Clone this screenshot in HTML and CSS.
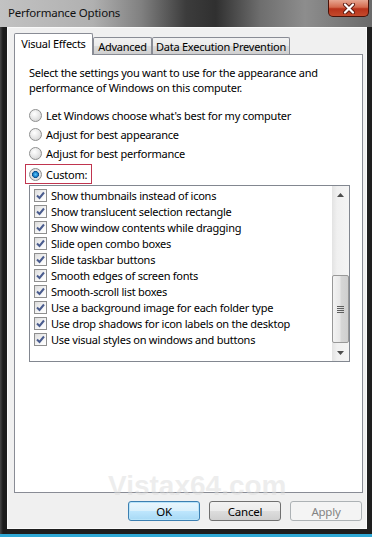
FILE: index.html
```html
<!DOCTYPE html>
<html lang="en">
<head>
    <meta charset="UTF-8">
    <meta name="viewport" content="width=device-width, initial-scale=1.0">
    <title>Performance Options</title>
    <link rel="stylesheet" href="styles.css">
</head>
<body>
    <div class="window">
        <div class="titlebar">
            <span class="title">Performance Options</span>
            <div class="close">
                <svg width="16" height="11" viewBox="0 0 16 11">
                    <path d="M4 1.5 L12 9.5 M12 1.5 L4 9.5" stroke="#5b1a10" stroke-width="4" stroke-linecap="round"/>
                    <path d="M4 1.5 L12 9.5 M12 1.5 L4 9.5" stroke="#ffffff" stroke-width="2.2" stroke-linecap="round"/>
                </svg>
            </div>
        </div>

        <div class="frame">
            <div class="client">
                <!-- Pestañas -->
                <div class="tabs">
                    <div class="tab active">Visual Effects</div>
                    <div class="tab">Advanced</div>
                    <div class="tab">Data Execution Prevention</div>
                </div>

                <div class="panel">
                    <p class="intro">
                        Select the settings you want to use for the appearance and<br>
                        performance of Windows on this computer.
                    </p>

                    <div class="radios">
                        <div class="radio"><span class="dot"></span>Let Windows choose what's best for my computer</div>
                        <div class="radio"><span class="dot"></span>Adjust for best appearance</div>
                        <div class="radio"><span class="dot"></span>Adjust for best performance</div>
                        <div class="radio custom"><span class="dot checked"></span>Custom:</div>
                    </div>

                    <div class="listbox">
                        <ul class="items">
                            <li><span class="check"></span>Show thumbnails instead of icons</li>
                            <li><span class="check"></span>Show translucent selection rectangle</li>
                            <li><span class="check"></span>Show window contents while dragging</li>
                            <li><span class="check"></span>Slide open combo boxes</li>
                            <li><span class="check"></span>Slide taskbar buttons</li>
                            <li><span class="check"></span>Smooth edges of screen fonts</li>
                            <li><span class="check"></span>Smooth-scroll list boxes</li>
                            <li><span class="check"></span>Use a background image for each folder type</li>
                            <li><span class="check"></span>Use drop shadows for icon labels on the desktop</li>
                            <li><span class="check"></span>Use visual styles on windows and buttons</li>
                        </ul>
                        <div class="scrollbar">
                            <div class="arrow">
                                <svg width="7" height="4" viewBox="0 0 7 4"><path d="M0 4 L3.5 0 L7 4 Z" fill="#4d4d4d"/></svg>
                            </div>
                            <div class="track">
                                <div class="thumb"><span class="grip"></span></div>
                            </div>
                            <div class="arrow">
                                <svg width="7" height="4" viewBox="0 0 7 4"><path d="M0 0 L7 0 L3.5 4 Z" fill="#4d4d4d"/></svg>
                            </div>
                        </div>
                    </div>
                </div>

                <!-- Botones -->
                <div class="buttons">
                    <div class="btn default">OK</div>
                    <div class="btn">Cancel</div>
                    <div class="btn disabled">Apply</div>
                </div>
            </div>
        </div>

        <div class="watermark">Vistax64.com</div>
    </div>
</body>
</html>
```

FILE: styles.css
```css
/* Base */
body {
    margin: 0;
    width: 372px;
    height: 537px;
    overflow: hidden;
    background-color: #2fa9d6; /* escritorio detrás */
    font-family: "Noto Sans", "Open Sans", sans-serif;
    font-size: 11px;
    letter-spacing: -0.25px;
    color: #000;
}

.window {
    position: relative;
    height: 534px;
    display: flex;
    flex-direction: column;
    background-color: #2a2a2a;
}

/* Barra de título (vidrio Aero) */
.titlebar {
    height: 27px;
    display: flex;
    justify-content: space-between;
    align-items: flex-start;
    padding-left: 8px;
    background: linear-gradient(90deg, #c2c2c2 0%, #b0b0b0 25%, #808080 38%, #3c3c3c 50%, #303030 58%, #6e6e6e 70%, #8d8d8d 82%, #6a6a6a 100%);
}

.title {
    margin-top: 5px;
    line-height: 16px;
    font-size: 11.5px;
    letter-spacing: -0.2px;
    color: #111;
}

.close {
    width: 41px;
    height: 17px;
    margin-right: 3px;
    box-sizing: border-box;
    display: flex;
    justify-content: center;
    align-items: center;
    border: 1px solid #4a1208;
    border-top: none;
    border-radius: 0 0 5px 5px;
    background: linear-gradient(180deg, #e7a691 0%, #d46a4e 45%, #b8321a 55%, #c44a2c 100%);
}

/* Marco */
.frame {
    flex: 1;
    display: flex;
    padding: 0 6px 5px 7px;
    background: linear-gradient(90deg, #474747 0px, #1c1c1c 3px, #1c1c1c 7px, transparent 7px),
                #1e1e1e;
}

.client {
    flex: 1;
    display: flex;
    flex-direction: column;
    padding: 5px 3px 7px 6px;
    background-color: #f0f0f0;
    border: 1px solid #fafafa;
}

/* Pestañas */
.tabs {
    height: 21px;
    display: flex;
    align-items: flex-end;
}

.tab {
    box-sizing: border-box;
    height: 17px;
    display: flex;
    justify-content: center;
    align-items: center;
    padding-top: 1px;
    border: 1px solid #898c95;
    border-bottom: none;
    border-radius: 2px 2px 0 0;
    background: linear-gradient(180deg, #f2f2f2 0%, #ebebeb 50%, #dddddd 51%, #cfcfcf 100%);
    white-space: nowrap;
}

.tab:nth-child(2) {
    width: 59px;
}

.tab:nth-child(3) {
    width: 138px;
}

.tab.active {
    position: relative;
    z-index: 1;
    width: 79px;
    height: 22px;
    margin-bottom: -1px;
    padding: 0 0 2px 0;
    background: #ffffff;
}

/* Panel */
.panel {
    flex: 1;
    padding: 10px 12px 0 14px;
    background-color: #ffffff;
    border: 1px solid #898c95;
}

.intro {
    margin: 0;
    line-height: 15px;
}

.radios {
    margin-top: 11px;
}

.radio {
    height: 19px;
    display: flex;
    align-items: center;
}

.radio.custom {
    box-sizing: border-box;
    width: 67px;
    height: 20px;
    margin: 1px 0 0 -4px;
    padding-left: 3px;
    border: 1px solid #c0354f;
}

.dot {
    box-sizing: border-box;
    width: 13px;
    height: 13px;
    margin-right: 4px;
    border: 1px solid #8e8f8f;
    border-radius: 50%;
    background: radial-gradient(circle at 40% 35%, #ffffff 0%, #e9e9e9 45%, #c9c9c9 100%);
}

.dot.checked {
    background: radial-gradient(circle, #58c8ff 0%, #1b7dc4 30%, #0b4a86 42%, #e6e6e6 48%, #d2d2d2 100%);
}

/* Lista con casillas */
.listbox {
    box-sizing: border-box;
    width: 321px;
    height: 177px;
    margin-top: 1px;
    display: flex;
    border: 1px solid #828790;
}

.items {
    flex: 1;
    margin: 0;
    padding: 1px 0 0 4px;
    list-style: none;
}

.items li {
    height: 16px;
    display: flex;
    align-items: center;
    white-space: nowrap;
}

.check {
    box-sizing: border-box;
    width: 13px;
    height: 13px;
    margin-right: 4px;
    border: 1px solid #8f8f8f;
    background:
        url("data:image/svg+xml,%3Csvg xmlns='http://www.w3.org/2000/svg' width='11' height='11' viewBox='0 0 11 11'%3E%3Cpath d='M2 5.5 L4.5 8 L9 2.5' fill='none' stroke='%234a5c8e' stroke-width='2'/%3E%3C/svg%3E") center / 11px 11px no-repeat,
        linear-gradient(135deg, #dcdcdc 0%, #f6f6f6 60%, #ffffff 100%);
}

/* Barra de desplazamiento */
.scrollbar {
    width: 17px;
    display: flex;
    flex-direction: column;
    background: linear-gradient(90deg, #e3e3e3 0%, #f0f0f0 30%, #f4f4f4 100%);
}

.arrow {
    height: 17px;
    display: flex;
    justify-content: center;
    align-items: center;
}

.track {
    flex: 1;
    display: flex;
    flex-direction: column;
    justify-content: flex-end;
}

.thumb {
    box-sizing: border-box;
    height: 68px;
    margin: 0 0 1px 0;
    display: flex;
    justify-content: center;
    align-items: center;
    border: 1px solid #989898;
    border-radius: 2px;
    background: linear-gradient(90deg, #f3f3f3 0%, #e8e8e8 45%, #d6d6d6 55%, #cfcfcf 100%);
}

.grip {
    width: 7px;
    height: 7px;
    background: repeating-linear-gradient(180deg, #5e5e5e 0px, #5e5e5e 1px, transparent 1px, transparent 2px);
}

/* Botones */
.buttons {
    display: flex;
    justify-content: flex-end;
    gap: 9px;
    margin: 8px 1px 0 0;
    font-size: 11.5px;
}

.btn {
    box-sizing: border-box;
    width: 72px;
    height: 20px;
    display: flex;
    justify-content: center;
    align-items: center;
    border: 1px solid #707070;
    border-radius: 3px;
    background: linear-gradient(180deg, #f2f2f2 0%, #ebebeb 50%, #dddddd 51%, #cfcfcf 100%);
}

.btn.default {
    border-color: #3c7fb1;
    background: linear-gradient(180deg, #eaf6fd 0%, #d9f0fc 50%, #bee6fd 51%, #a7d9f5 100%);
    box-shadow: inset 0 0 0 1px #b8e4fa;
}

.btn.disabled {
    border-color: #adb2b5;
    background: #f4f4f4;
    color: #838383;
}

/* Marca de agua */
.watermark {
    position: absolute;
    left: 108px;
    top: 470px;
    font-family: "Liberation Sans", Arial, sans-serif;
    font-size: 28px;
    font-weight: bold;
    letter-spacing: 0;
    color: rgba(220, 220, 220, 0.5);
    pointer-events: none;
}
```
